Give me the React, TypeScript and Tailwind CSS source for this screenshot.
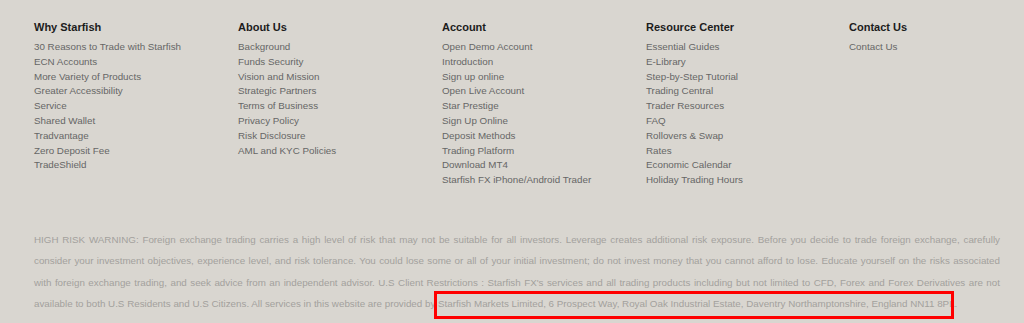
import React from "react";

const cols: { title: string; links: string[] }[] = [
  {
    title: "Why Starfish",
    links: [
      "30 Reasons to Trade with Starfish",
      "ECN Accounts",
      "More Variety of Products",
      "Greater Accessibility",
      "Service",
      "Shared Wallet",
      "Tradvantage",
      "Zero Deposit Fee",
      "TradeShield",
    ],
  },
  {
    title: "About Us",
    links: [
      "Background",
      "Funds Security",
      "Vision and Mission",
      "Strategic Partners",
      "Terms of Business",
      "Privacy Policy",
      "Risk Disclosure",
      "AML and KYC Policies",
    ],
  },
  {
    title: "Account",
    links: [
      "Open Demo Account",
      "Introduction",
      "Sign up online",
      "Open Live Account",
      "Star Prestige",
      "Sign Up Online",
      "Deposit Methods",
      "Trading Platform",
      "Download MT4",
      "Starfish FX iPhone/Android Trader",
    ],
  },
  {
    title: "Resource Center",
    links: [
      "Essential Guides",
      "E-Library",
      "Step-by-Step Tutorial",
      "Trading Central",
      "Trader Resources",
      "FAQ",
      "Rollovers & Swap",
      "Rates",
      "Economic Calendar",
      "Holiday Trading Hours",
    ],
  },
  {
    title: "Contact Us",
    links: ["Contact Us"],
  },
];

const warningLines = [
  "HIGH RISK WARNING: Foreign exchange trading carries a high level of risk that may not be suitable for all investors. Leverage creates additional risk exposure. Before you decide to trade foreign exchange, carefully",
  "consider your investment objectives, experience level, and risk tolerance. You could lose some or all of your initial investment; do not invest money that you cannot afford to lose. Educate yourself on the risks associated",
  "with foreign exchange trading, and seek advice from an independent advisor. U.S Client Restrictions : Starfish FX's services and all trading products including but not limited to CFD, Forex and Forex Derivatives are not",
];

export default function App() {
  return (
    <div
      className="relative w-[1024px] h-[323px] overflow-hidden bg-[#d9d6d0] pl-[34px] pr-[24px]"
      style={{ fontFamily: '"Liberation Sans", Arial, sans-serif' }}
    >
      <div className="grid grid-cols-[204px_204px_204px_203px_1fr] pt-[20px]">
        {cols.map((c) => (
          <div key={c.title} className="flex flex-col">
            <div className="text-[11px] leading-[14px] font-bold text-[#1c1c1c] mb-[6px]">
              {c.title}
            </div>
            {c.links.map((l) => (
              <div
                key={l}
                className="text-[9.8px] leading-[14.8px] text-[#666666]"
              >
                {l}
              </div>
            ))}
          </div>
        ))}
      </div>
      <div className="mt-[41px] text-[9.8px] leading-[21.3px] text-[#a3a19d] whitespace-nowrap">
        {warningLines.map((t) => (
          <div key={t} className="text-justify [text-align-last:justify]">
            {t}
          </div>
        ))}
        <div>
          available to both U.S Residents and U.S Citizens. All services in this website are provided by Starfish Markets Limited, 6 Prospect Way, Royal Oak Industrial Estate, Daventry Northamptonshire, England NN11 8PL.
        </div>
      </div>
      <div className="absolute left-[434px] top-[291px] w-[520px] h-[28px] border-[3px] border-[#ff0000]" />
    </div>
  );
}
